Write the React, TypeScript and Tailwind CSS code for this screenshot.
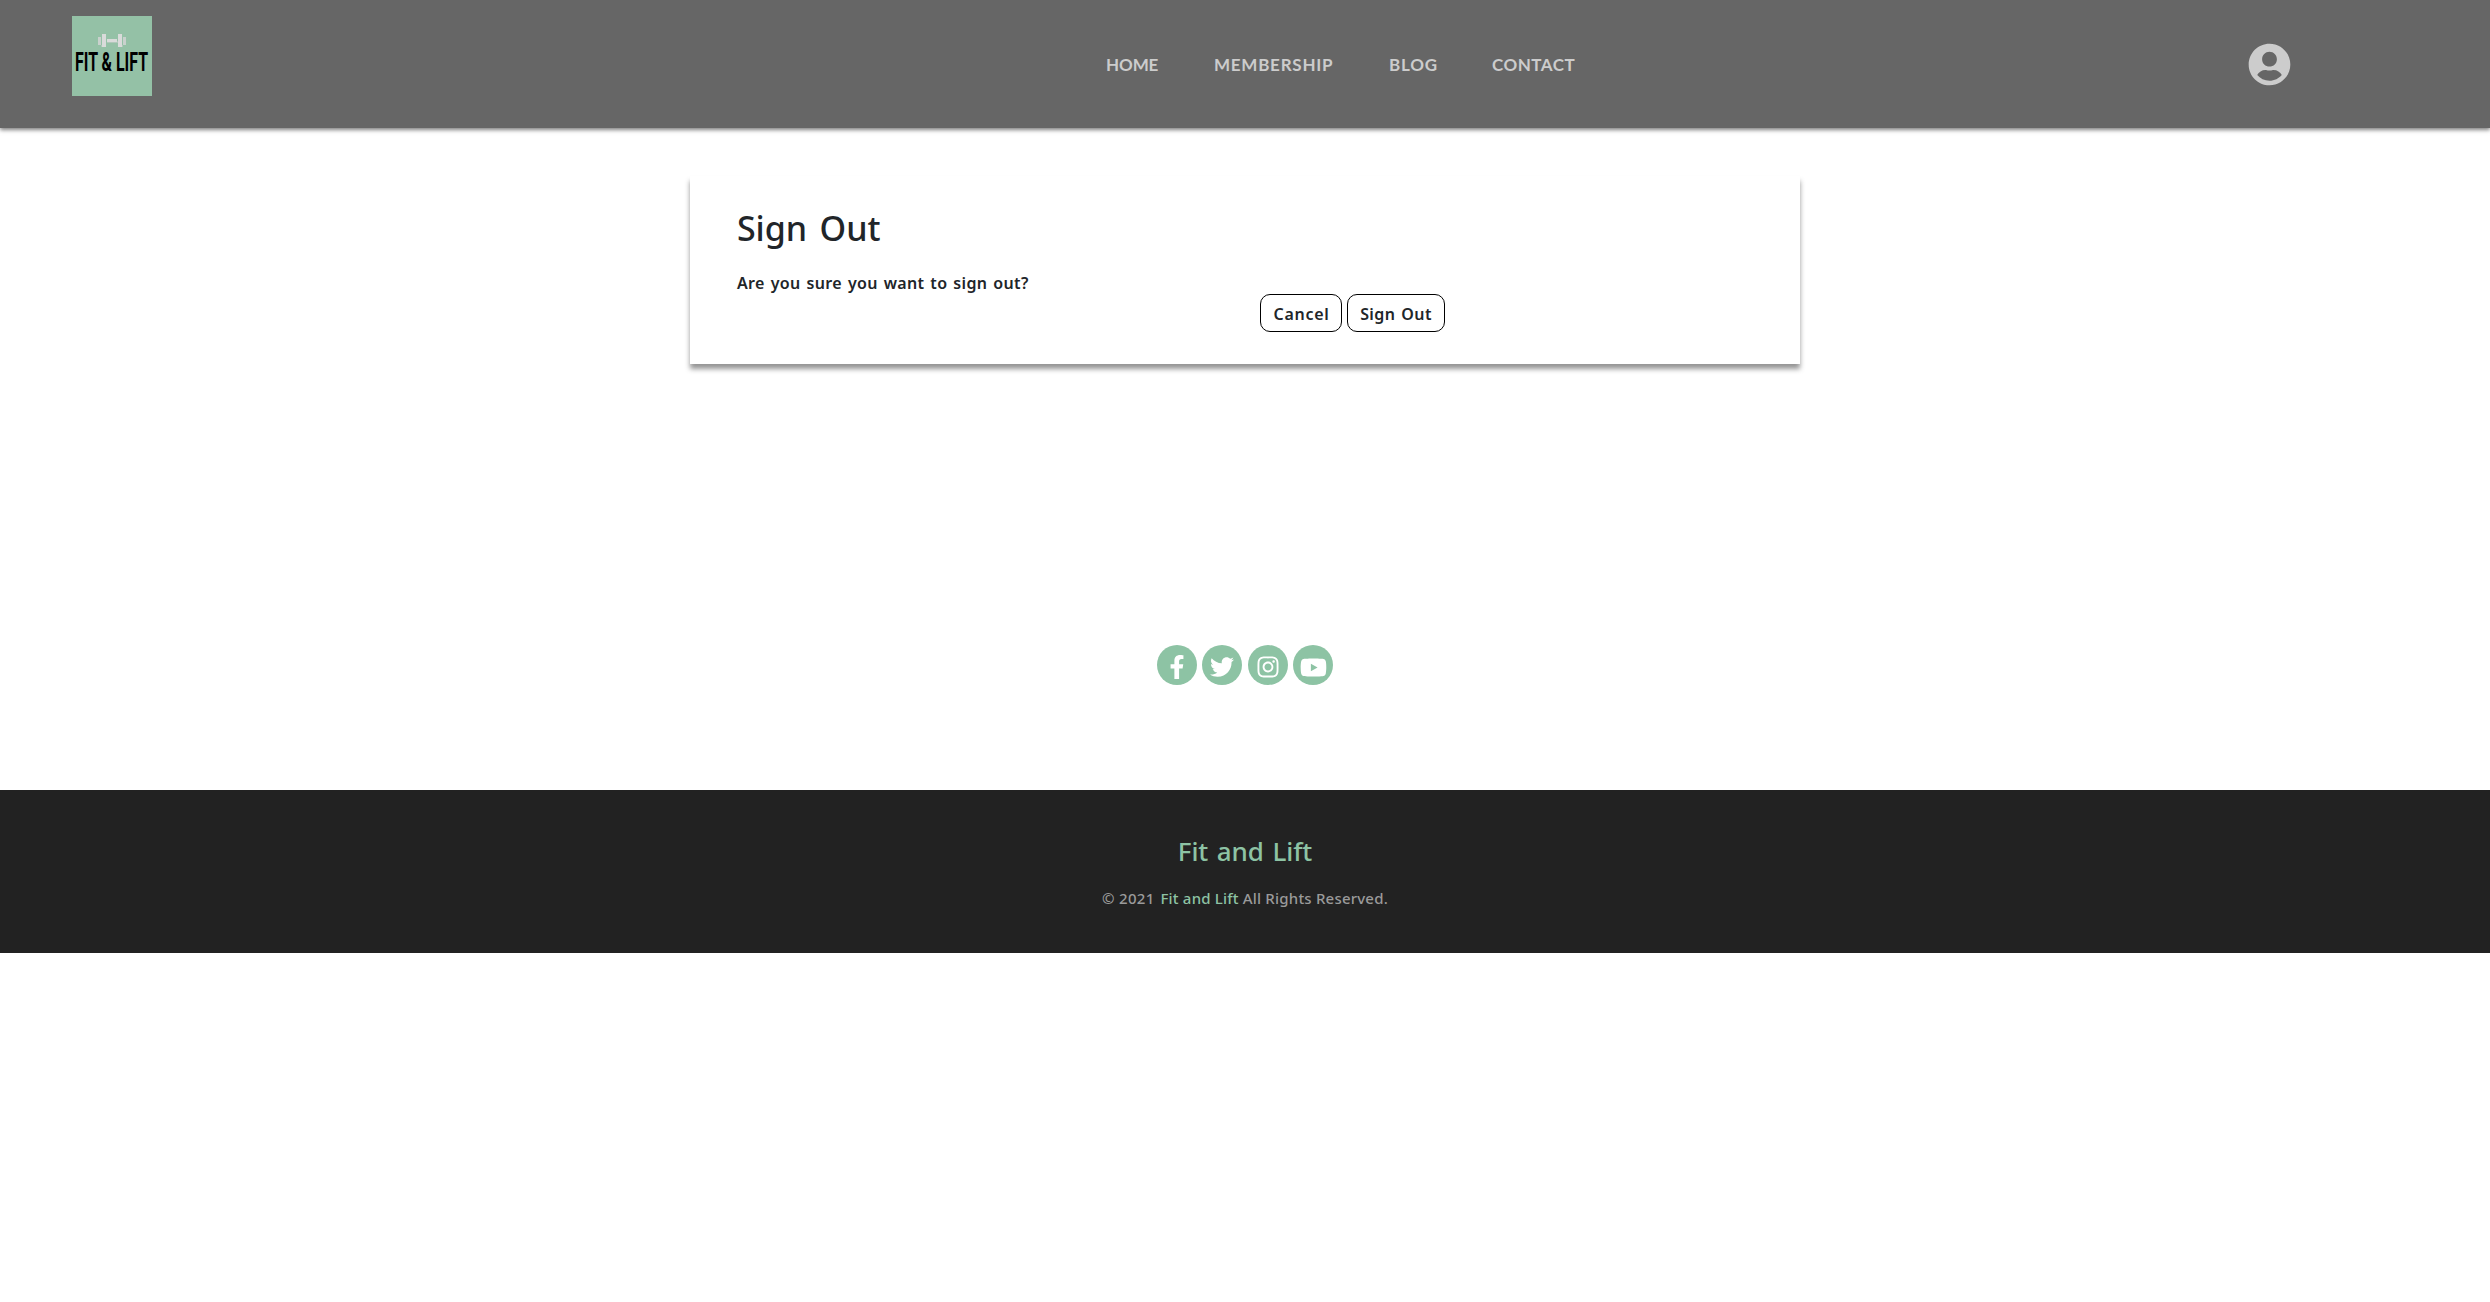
import { FaFacebookF, FaInstagram, FaTwitter, FaUserCircle, FaYoutube } from "react-icons/fa";

function Logo() {
  return (
    <svg className="h-20 w-20 overflow-visible" viewBox="0 0 80 80" role="img" aria-label="Fit & Lift">
      <rect width="80" height="80" fill="#94c1a6" />
      <g fill="#b0c8ba">
        <rect x="29" y="29" width="5" height="2" />
        <rect x="35" y="25" width="11" height="2" />
        <rect x="46" y="29" width="5" height="2" />
      </g>
      <g fill="#d9dbda">
        <rect x="26" y="21" width="3" height="8" fill="#c9d1cd" />
        <rect x="30" y="18" width="4" height="13" />
        <rect x="35" y="23" width="10" height="3" />
        <rect x="46" y="18" width="4" height="13" />
        <rect x="51" y="21" width="3" height="8" fill="#c9d1cd" />
      </g>
      <text
        x="3"
        y="55"
        textLength="73"
        lengthAdjust="spacingAndGlyphs"
        fontFamily="Roboto, sans-serif"
        fontWeight="700"
        fontSize="25.3"
        fill="#000"
      >
        FIT &amp; LIFT
      </text>
    </svg>
  );
}

const social = [
  { label: "Facebook", Icon: FaFacebookF, margin: "", size: "size-6" },
  { label: "Twitter", Icon: FaTwitter, margin: "ml-[5px]", size: "size-6" },
  { label: "Instagram", Icon: FaInstagram, margin: "ml-[6px]", size: "size-6" },
  { label: "YouTube", Icon: FaYoutube, margin: "ml-[5px]", size: "size-[27px]" },
];

export default function App() {
  return (
    <div className="min-h-[1302px] bg-white font-['Noto_Sans',sans-serif] text-[#212529]">
      <header className="flex h-32 bg-[#666] shadow-[0_2px_4px_rgba(0,0,0,0.5)]">
        <div className="w-[1106px] pt-4 pl-[72px]">
          <Logo />
        </div>
        <nav className="flex w-[1142px] items-center pt-0.5 font-['Lato',sans-serif] text-[17px] leading-6 font-bold whitespace-nowrap text-[#ccc]">
          <a className="w-[108px] tracking-[-0.1px]">HOME</a>
          <a className="w-[175px] tracking-[0.75px]">MEMBERSHIP</a>
          <a className="w-[103px] tracking-[0.8px]">BLOG</a>
          <a className="tracking-[0.5px]">CONTACT</a>
        </nav>
        <div className="flex items-center pt-px">
          <FaUserCircle className="size-[43px] text-[#ccc]" />
        </div>
      </header>

      <main>
        <section className="mx-auto mt-12 h-[188px] w-[1110px] bg-white px-[47px] pt-[31px] shadow-[0_5px_5px_rgba(0,0,0,0.42)]">
          <h1 className="text-[34px] leading-[43px] font-medium tracking-[-0.1px] [word-spacing:4px]">Sign Out</h1>
          <p className="mt-[21px] text-[16px] leading-6 font-semibold tracking-[0.35px] [word-spacing:1.4px]">
            Are you sure you want to sign out?
          </p>
          <div className="-mt-px ml-[523px] flex gap-[5px] text-[16px] font-semibold whitespace-nowrap">
            <button className="h-[38px] w-[82px] rounded-[10px] border border-black pt-px pl-px tracking-[0.7px]">
              Cancel
            </button>
            <button className="h-[38px] w-[98px] rounded-[10px] border border-black pt-px tracking-[0.4px] [word-spacing:1.5px]">
              Sign Out
            </button>
          </div>
        </section>
      </main>

      <div className="mt-[281px] flex pl-[1157px]">
        {social.map(({ label, Icon, margin, size }) => (
          <a
            key={label}
            aria-label={label}
            className={`flex h-10 w-10 items-center justify-center rounded-full bg-[#8dc3a4] pt-1 text-white ${margin}`}
          >
            <Icon className={size} />
          </a>
        ))}
      </div>

      <footer className="mt-[105px] h-[163px] bg-[#222] pt-[45px] text-center">
        <h2 className="text-[26px] leading-8 font-medium tracking-[-0.1px] text-[#8dc3a4] [word-spacing:2px]">Fit and Lift</h2>
        <p className="mt-[19px] text-[15px] leading-6 font-medium text-[#9a9a9a]">
          <span className="mr-0.5 tracking-[0.3px]">© 2021</span>{" "}
          <span className="tracking-[0.2px] text-[#8dc3a4]">Fit and Lift</span>{" "}
          <span className="tracking-[0.2px]">All Rights Reserved.</span>
        </p>
      </footer>
    </div>
  );
}
